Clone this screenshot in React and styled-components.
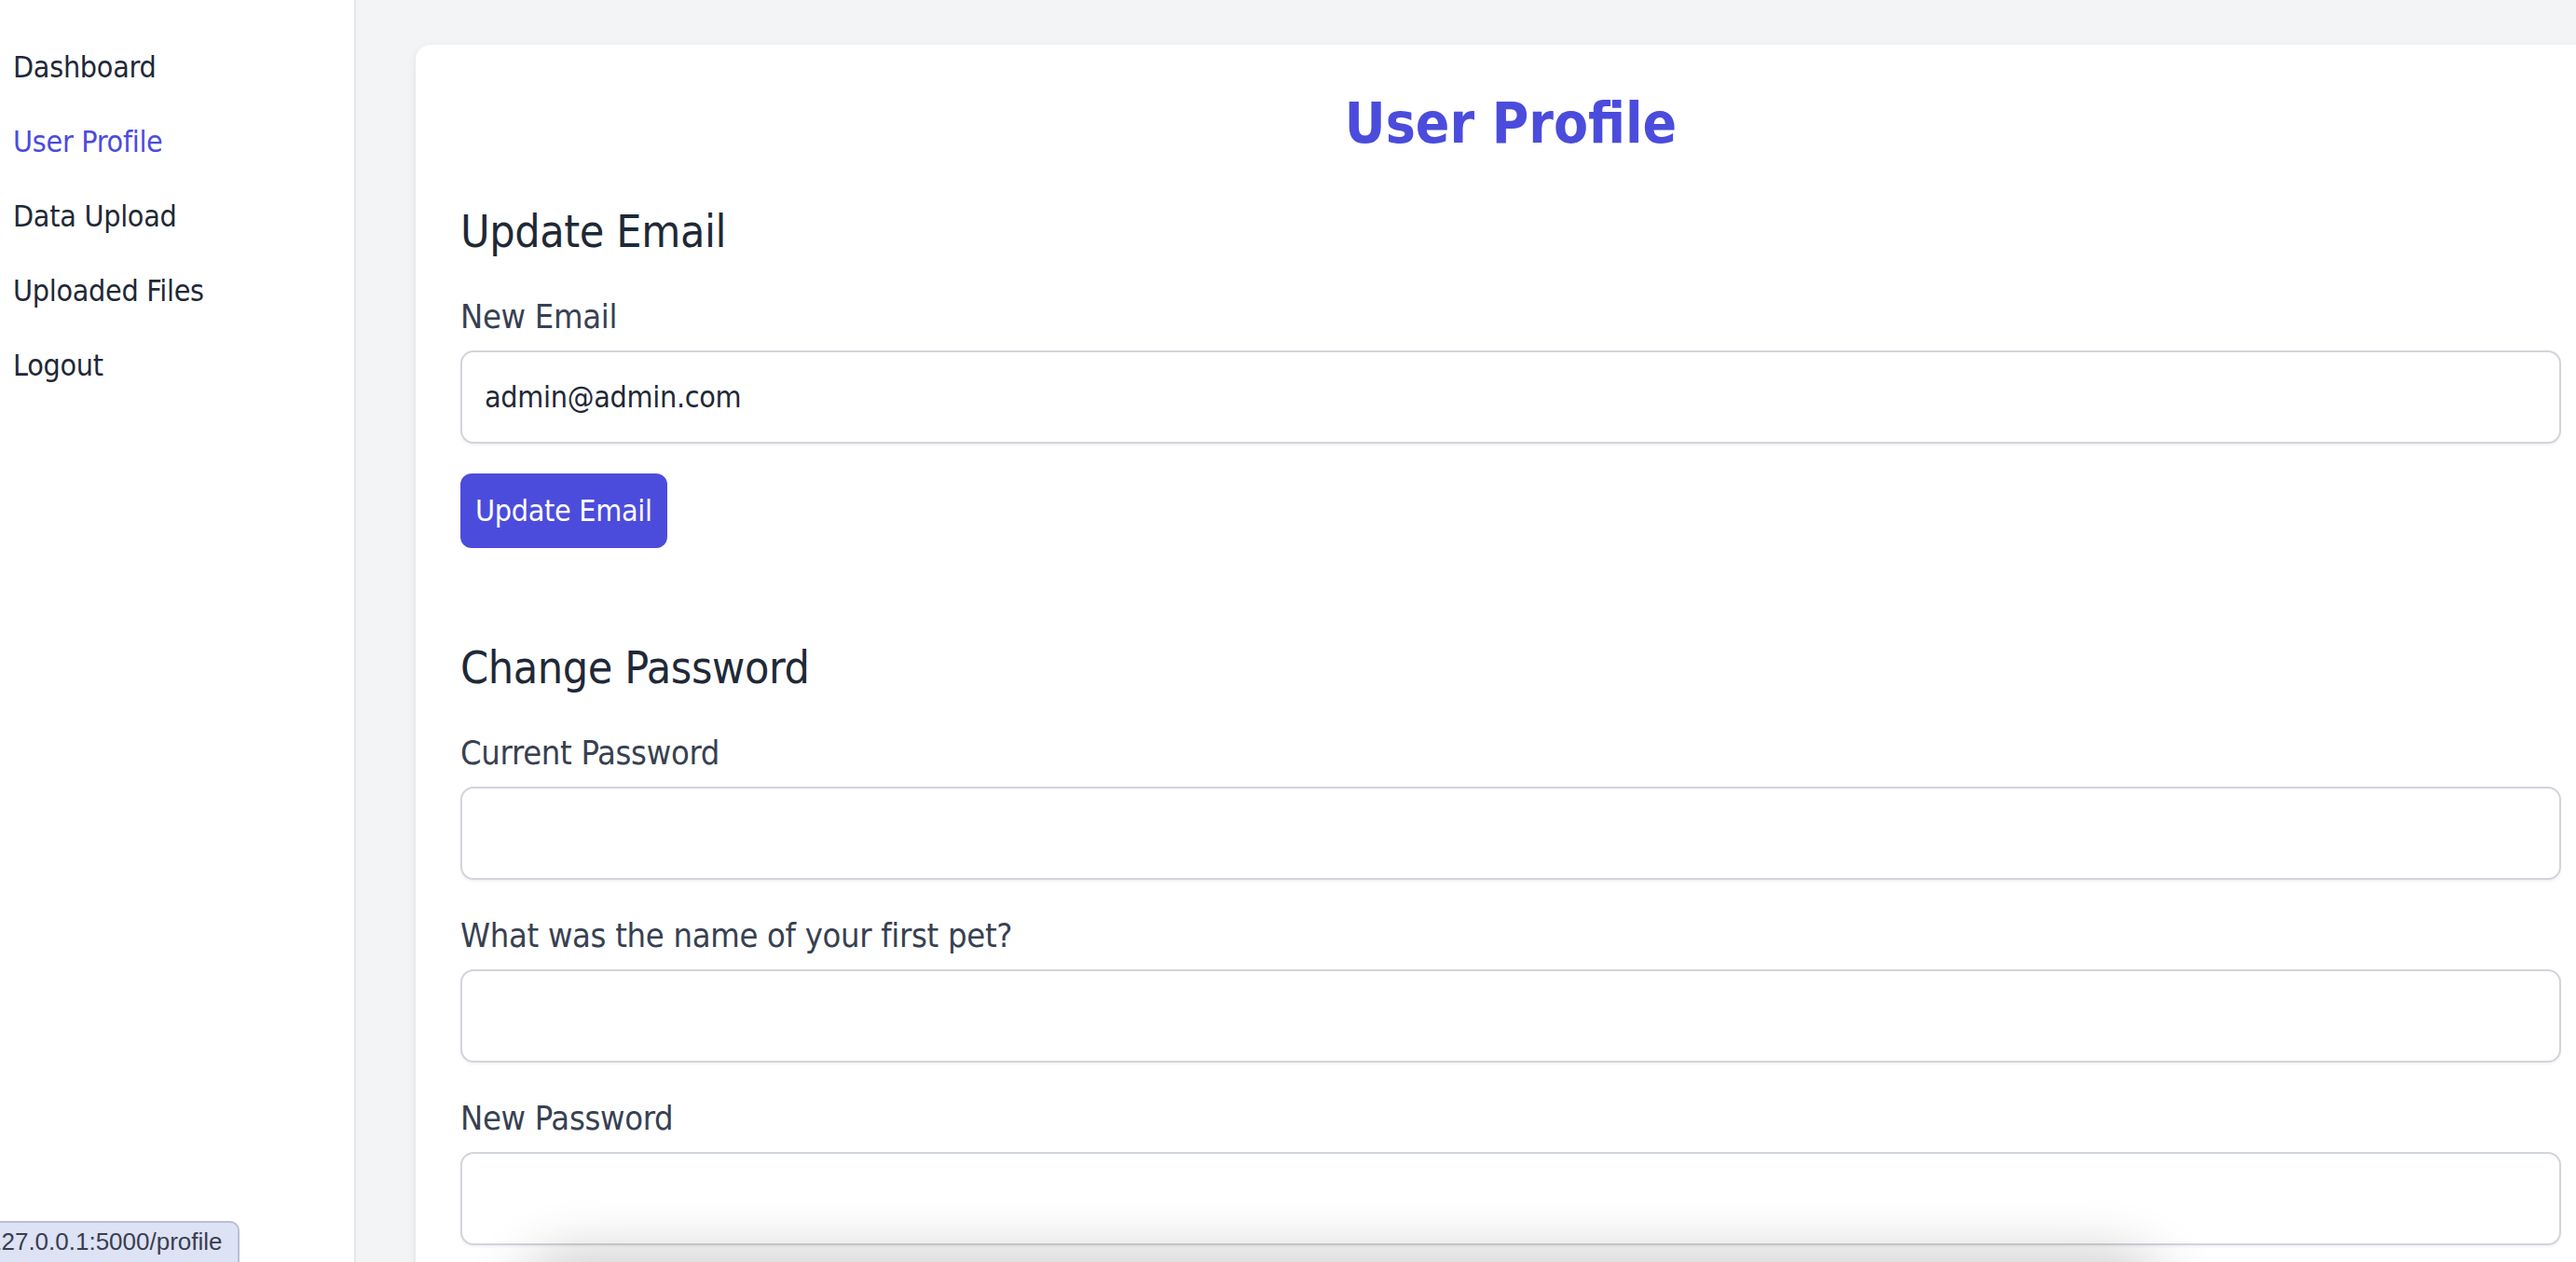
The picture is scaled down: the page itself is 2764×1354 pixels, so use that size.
import React from 'react';
import styled, { createGlobalStyle } from 'styled-components';

const GlobalStyle = createGlobalStyle`
  html, body {
    margin: 0;
    padding: 0;
    overflow: hidden;
    background: #f3f4f6;
  }
  body {
    font-family: "DejaVu Sans Condensed", "DejaVu Sans", sans-serif;
    font-stretch: semi-condensed;
  }
  * { box-sizing: border-box; }
`;

const Layout = styled.div`
display: flex;
min-height: 100vh;
`;

const Sidebar = styled.nav`
width: 382px;
flex-shrink: 0;
background: #ffffff;
border-right: 2px solid #e5e7eb;
padding-top: 32px;
display: flex;
flex-direction: column;
`;

const NavLink = styled.a`
display: block;
padding: 16px 14px;
font-size: 32px;
line-height: 48px;
letter-spacing: -0.3px;
color: ${props => (props.active ? '#4b4cdc' : '#1f2937')};
text-decoration: none;
cursor: pointer;
`;

const Main = styled.main`
flex-shrink: 0;
padding: 48px 64px;
`;

const Card = styled.div`
width: 2350px;
background: #ffffff;
border-radius: 16px;
padding: 48px;
box-shadow: 0 4px 12px rgba(0, 0, 0, 0.06), 0 1px 4px rgba(0, 0, 0, 0.04);
`;

const Title = styled.h1`
margin: 0 0 48px;
text-align: center;
font-size: 60px;
line-height: 72px;
font-weight: 700;
color: #4b4cdc;
`;

const Section = styled.section`
margin-bottom: 96px;
`;

const SectionTitle = styled.h2`
margin: 0 0 32px;
font-size: 48px;
line-height: 64px;
font-weight: 400;
letter-spacing: -0.4px;
color: #1f2937;
`;

const Field = styled.div`
margin-bottom: 32px;
`;

const Label = styled.label`
display: block;
margin-bottom: 8px;
font-size: 36px;
line-height: 56px;
letter-spacing: -0.3px;
color: #374151;
`;

const Input = styled.input`
display: block;
width: 100%;
height: 100px;
padding: 24px;
border: 2px solid #d1d5db;
border-radius: 14px;
font-family: inherit;
font-stretch: inherit;
font-size: 32px;
line-height: 48px;
letter-spacing: -0.3px;
color: #1f2937;
background: #ffffff;
box-shadow: 0 2px 3px rgba(0, 0, 0, 0.05);
outline: none;
`;

const Button = styled.button`
padding: 16px;
border: none;
border-radius: 12px;
background: #4b4cdc;
color: #ffffff;
font-family: inherit;
font-stretch: inherit;
font-size: 32px;
line-height: 48px;
letter-spacing: -0.3px;
cursor: pointer;
`;

/* browser status bubble overlaid at the bottom-left corner */
const StatusBubble = styled.div`
position: fixed;
left: -15px;
bottom: 0;
padding: 4px 16px 6px 2px;
background: #dde2f5;
border-top: 2px solid #b9bfd3;
border-right: 2px solid #b9bfd3;
border-top-right-radius: 10px;
font-family: "Liberation Sans", Arial, sans-serif;
font-size: 26px;
line-height: 32px;
color: #3a3e4d;
`;

/* shadow of something floating just below the visible frame */
const BottomShade = styled.div`
position: fixed;
left: 580px;
top: calc(100vh + 24px);
width: 1720px;
height: 80px;
border-radius: 40px;
box-shadow: 0 0 60px 34px rgba(0, 0, 0, 0.2);
`;

const navItems = ['Dashboard', 'User Profile', 'Data Upload', 'Uploaded Files', 'Logout'];

export default function App() {
  return (
    <>
      <GlobalStyle />
      <Layout>
        <Sidebar>
          {navItems.map(item => (
            <NavLink key={item} active={item === 'User Profile' ? 1 : 0}>
              {item}
            </NavLink>
          ))}
        </Sidebar>
        <Main>
          <Card>
            <Title>User Profile</Title>

            <Section>
              <SectionTitle>Update Email</SectionTitle>
              <Field>
                <Label>New Email</Label>
                <Input type="email" defaultValue="admin@admin.com" />
              </Field>
              <Button>Update Email</Button>
            </Section>

            <section>
              <SectionTitle>Change Password</SectionTitle>
              <Field>
                <Label>Current Password</Label>
                <Input type="password" />
              </Field>
              <Field>
                <Label>What was the name of your first pet?</Label>
                <Input type="text" />
              </Field>
              <Field>
                <Label>New Password</Label>
                <Input type="password" />
              </Field>
            </section>
          </Card>
        </Main>
      </Layout>
      <BottomShade />
      <StatusBubble>127.0.0.1:5000/profile</StatusBubble>
    </>
  );
}
